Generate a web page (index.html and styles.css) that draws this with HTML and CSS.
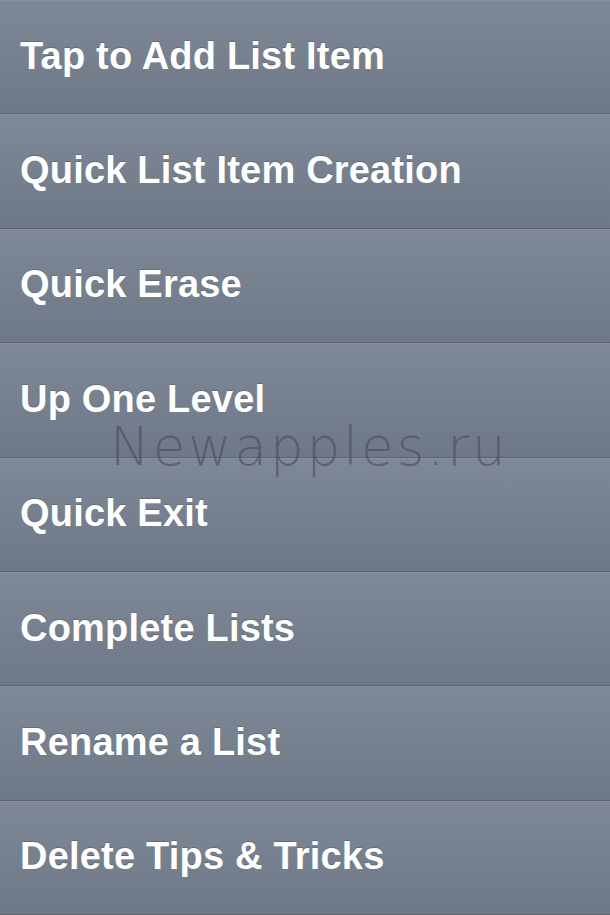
FILE: index.html
```html
<!DOCTYPE html>
<html>
<head>
    <title>Tips & Tricks</title>
    <meta charset="utf-8">
    <meta name="viewport" content="width=device-width, initial-scale=1">
    <link rel="stylesheet" href="styles.css">
</head>
<body>
    <div class="tips-list">
        <div class="tip-row">Tap to Add List Item</div>
        <div class="tip-row">Quick List Item Creation</div>
        <div class="tip-row">Quick Erase</div>
        <div class="tip-row">Up One Level</div>
        <div class="tip-row">Quick Exit</div>
        <div class="tip-row">Complete Lists</div>
        <div class="tip-row">Rename a List</div>
        <div class="tip-row">Delete Tips &amp; Tricks</div>
    </div>

    <div class="watermark">Newapples.ru</div>
</body>
</html>
```

FILE: styles.css
```css
body {
    margin: 0;
    width: 610px;
    height: 915px;
    overflow: hidden;
    position: relative;
    background: #6e7786;
    font-family: "Liberation Sans", Arial, Helvetica, sans-serif;
}

.tips-list {
    display: flex;
    flex-direction: column;
    height: 100%;
}

.tip-row {
    flex: 1;
    display: flex;
    align-items: center;
    padding: 0 20px 2px;
    color: #fff;
    font-size: 38px;
    font-weight: 700;
    letter-spacing: 0.2px;
    text-shadow: 0 -1px 0 rgba(60, 66, 78, 0.35);
    background: linear-gradient(to bottom, #7e8897 0%, #767f8e 55%, #6f7886 100%);
    border-top: 1px solid #858f9e;
    border-bottom: 1px solid #5d6572;
    box-sizing: border-box;
}

/* watermark sits over the list */
.watermark {
    position: absolute;
    left: 110px;
    top: 416px;
    font-family: "DejaVu Sans", sans-serif;
    font-size: 53px;
    font-weight: 200;
    letter-spacing: 3px;
    color: rgba(70, 76, 86, 0.6);
    pointer-events: none;
}
```
